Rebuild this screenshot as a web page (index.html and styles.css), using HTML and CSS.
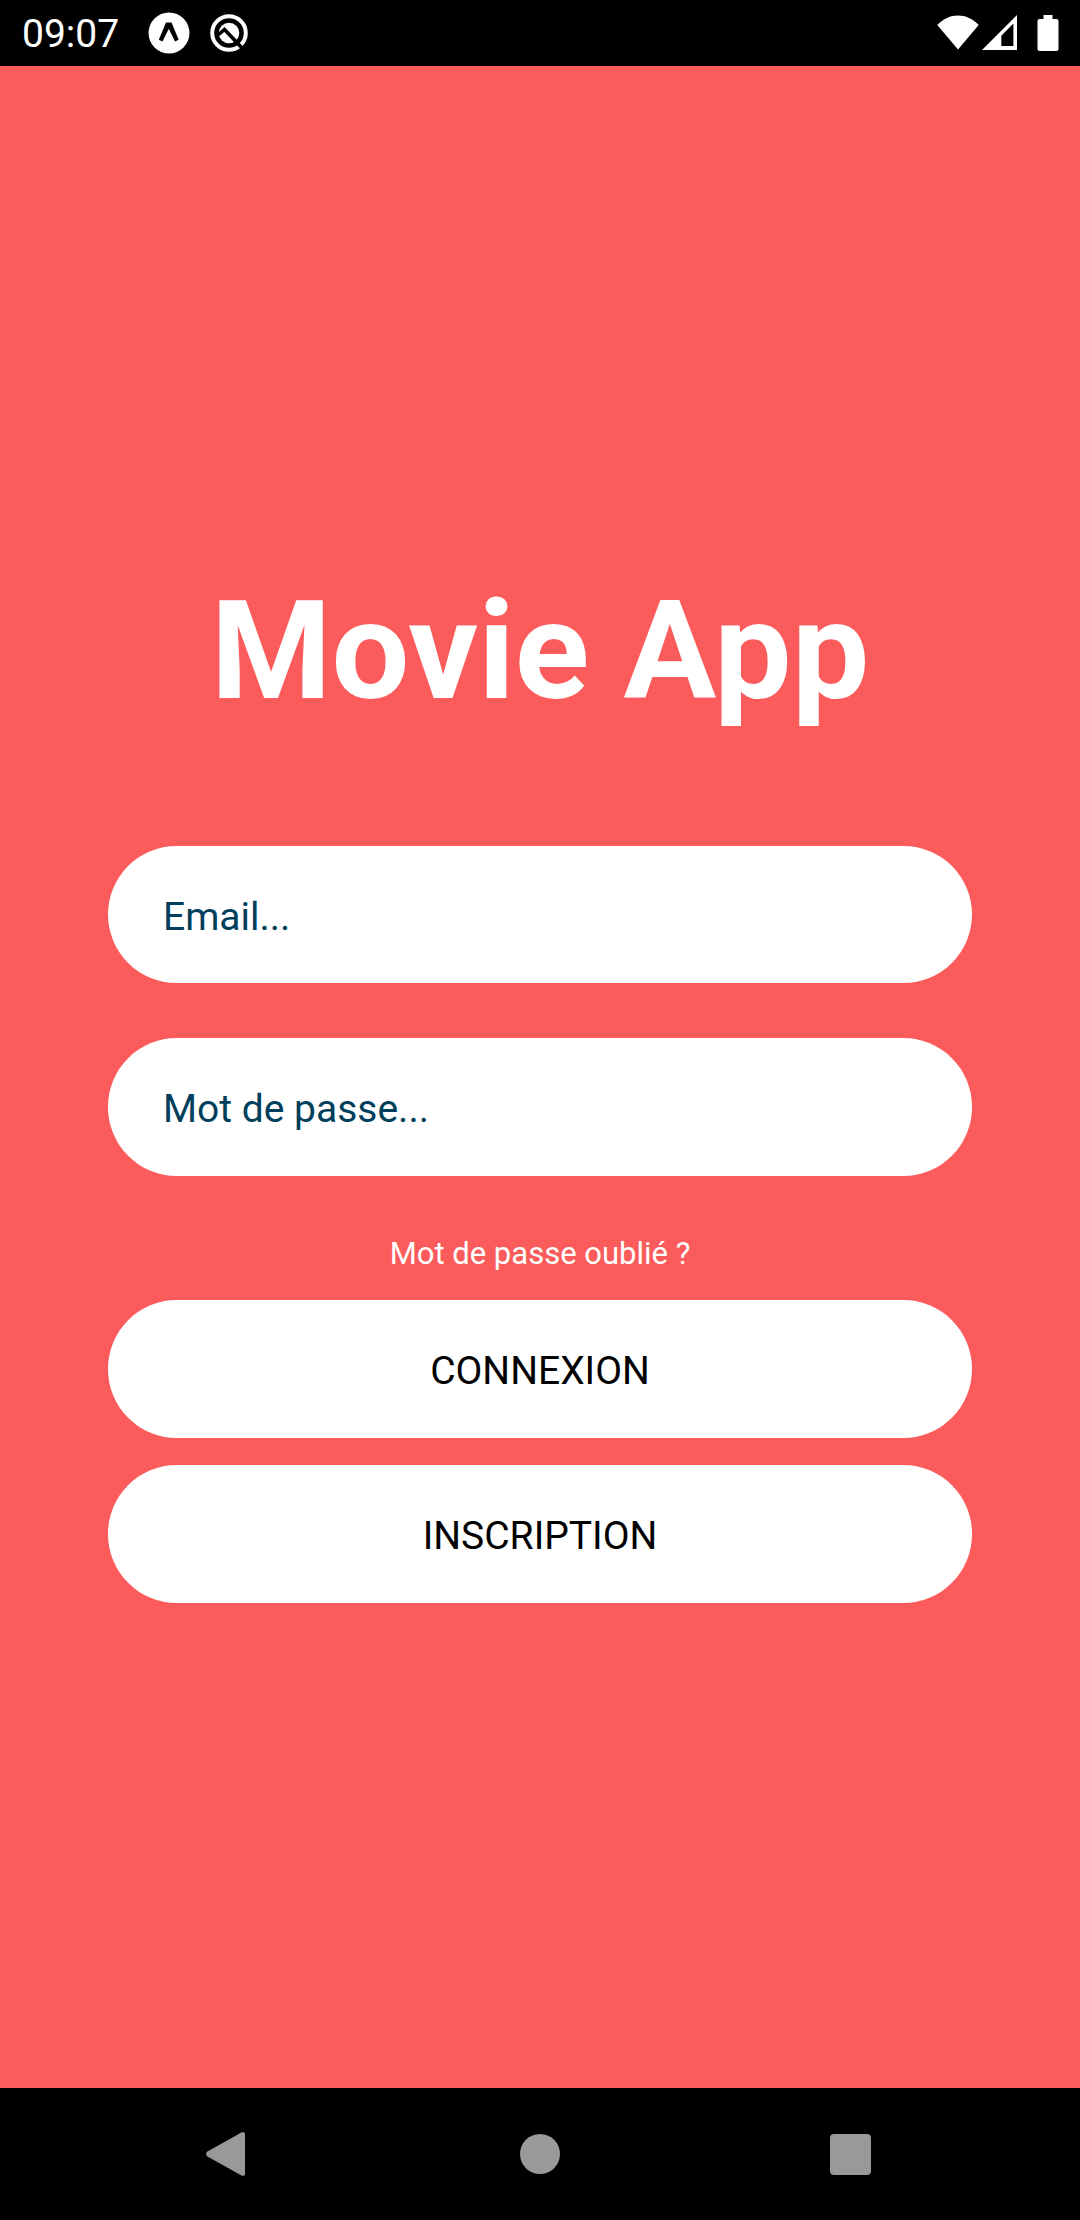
FILE: index.html
```html
<!DOCTYPE html>
<html lang="fr">
<head>
<meta charset="utf-8">
<title>Movie App</title>
<link rel="stylesheet" href="styles.css">
</head>
<body>
<header class="status-bar">
  <span class="clock">09:07</span>
  <svg class="icon-expo" viewBox="0 0 42 42"><circle cx="21" cy="21" r="20.5" fill="#fff"/><path d="M18 10.500H23.500L30.700 27.700 27 29.500 20.800 16.800 14.500 29.500 10.800 27.700Z" fill="#000"/></svg>
  <svg class="icon-q" viewBox="0 0 38 38" fill="none"><circle cx="19" cy="19" r="16.800" stroke="#fff" stroke-width="4"/><circle cx="19" cy="19" r="10.300" fill="#fff"/><path d="M8 21 14.500 15.500 33 35" stroke="#000" stroke-width="3.600"/></svg>
  <span class="spacer"></span>
  <svg class="icon-wifi" viewBox="0 0 42 35"><path d="M.3 10C12-2.8 30-2.8 41.7 10L21 34.6Z" fill="#fff"/></svg>
  <svg class="icon-signal" viewBox="0 0 35 35"><path d="M0 35 35 0V35ZM19.3 20.7V31H31.4V8.6Z" fill="#fff" fill-rule="evenodd"/></svg>
  <svg class="icon-battery" viewBox="0 0 22 36"><path d="M6.5 0h9v4H19.500q2 0 2 2V34q0 2-2 2H2.500q-2 0-2-2V6q0-2 2-2h4Z" fill="#fff"/></svg>
</header>
<main class="login">
  <h1 class="logo">Movie App</h1>
  <form class="form">
    <input class="field" type="email" placeholder="Email..." aria-label="Email">
    <input class="field" type="password" placeholder="Mot de passe..." aria-label="Mot de passe">
    <a class="forgot">Mot de passe oublié ?</a>
    <button class="button" type="button">CONNEXION</button>
    <button class="button" type="button">INSCRIPTION</button>
  </form>
</main>
<nav class="nav-bar">
  <svg class="nav-icon" viewBox="0 0 50 50"><path d="M40.500 3.900Q44.500 1.800 45 5V45Q44.500 48.200 40.500 46.100L7.500 27.500Q4.500 25 7.500 22.500Z" fill="#999"/></svg>
  <svg class="nav-icon" viewBox="0 0 50 50"><circle cx="25" cy="25" r="20" fill="#999"/></svg>
  <svg class="nav-icon" viewBox="0 0 50 50"><rect x="5" y="5" width="41" height="41" rx="4" fill="#999"/></svg>
</nav>
</body>
</html>
```
FILE: styles.css
```css
* {
  box-sizing: border-box;
}

body {
  margin: 0;
  height: 2220px;
  display: flex;
  flex-direction: column;
  background: #fb5b5a;
  font-family: Roboto, sans-serif;
  overflow: hidden;
}

svg {
  display: block;
  flex: none;
}

.status-bar {
  flex: none;
  height: 66px;
  display: flex;
  align-items: flex-start;
  padding: 0 21px 0 22px;
  background: #000;
  color: #fff;
}

.clock {
  width: 126px;
  padding-top: 11px;
  font-size: 39px;
  line-height: 46px;
}

.icon-expo {
  width: 42px;
  height: 42px;
  margin-top: 12px;
}

.icon-q {
  width: 38px;
  height: 38px;
  margin: 14px 0 0 20px;
}

.spacer {
  flex: 1;
}

.icon-wifi {
  width: 42px;
  height: 35px;
  margin: 15px 3px 0 0;
}

.icon-signal {
  width: 35px;
  height: 35px;
  margin: 15px 20px 0 0;
}

.icon-battery {
  width: 22px;
  height: 36px;
  margin-top: 15px;
}

.login {
  flex: 1;
  display: flex;
  flex-direction: column;
  align-items: center;
  padding-top: 505px;
}

.logo {
  margin: 0 0 113.5px;
  font-size: 138px;
  line-height: 161px;
  font-weight: 700;
  color: #fff;
  white-space: nowrap;
}

.form {
  width: 864px;
  display: flex;
  flex-direction: column;
}

.field,
.button {
  height: 137.5px;
  border: 0;
  border-radius: 68.75px;
  background: #fff;
  font: 400 39px/46px Roboto, sans-serif;
}

.field {
  margin: 0 0 55px;
  padding: 5px 55px 0;
  color: #003f5c;
}

.field::placeholder {
  color: #003f5c;
  opacity: 1;
}

.forgot {
  height: 69.5px;
  padding-top: 5px;
  font-size: 31px;
  line-height: 36px;
  text-align: center;
  color: #fff;
}

.button {
  margin-bottom: 27.5px;
  padding: 4px 0 0;
  color: #000;
}

.nav-bar {
  flex: none;
  height: 132px;
  display: flex;
  justify-content: space-between;
  align-items: flex-start;
  padding: 41px 205px 0 200px;
  background: #000;
}

.nav-icon {
  width: 50px;
  height: 50px;
}

.nav-icon:nth-child(2) {
  margin-left: 5px;
}
```
